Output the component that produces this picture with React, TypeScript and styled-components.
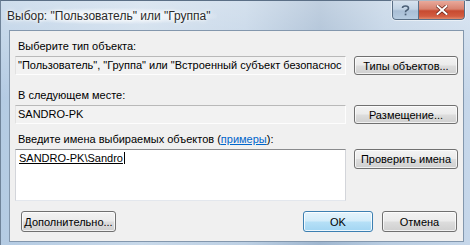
import React from 'react'
import styled, { createGlobalStyle, css } from 'styled-components'

const GlobalStyle = createGlobalStyle`
  html, body {
    margin: 0;
    padding: 0;
    width: 470px;
    height: 245px;
    overflow: hidden;
    font-family: "Liberation Sans", Arial, sans-serif;
  }
`

const Frame = styled.div`
  width: 470px;
  height: 245px;
  box-sizing: border-box;
  display: flex;
  flex-direction: column;
  border-top: 1px solid #5b6f86;
  border-left: 1px solid #6f8399;
  background:
    linear-gradient(180deg, rgba(255,255,255,0.35) 0%, rgba(255,255,255,0) 40%),
    linear-gradient(90deg, #b4cbe3 0%, #c8d9ea 30%, #bdd0e4 52%, #9fb6cf 68%, #b9cde2 82%, #c6d7ea 100%);
`

const TitleBar = styled.div`
  height: 29px;
  display: flex;
  align-items: flex-start;
  justify-content: space-between;
  padding-left: 6px;
  padding-right: 5px;
`

const Title = styled.div`
  margin-top: 7px;
  font-size: 12px;
  color: #2a2a2a;
  padding: 1px 6px 1px 0;
  background: radial-gradient(ellipse at center, rgba(240,245,250,0.85) 40%, rgba(240,245,250,0) 75%);
  text-shadow: 0 0 6px #fff, 0 0 3px #fff;
`

const Caption = styled.div`
  display: flex;
  height: 19px;
  box-shadow: 0 0 0 1px rgba(255,255,255,0.5);
  border-radius: 0 0 4px 4px;
  overflow: hidden;
`

const CaptionButton = styled.div<{ $close?: boolean }>`
  display: flex;
  align-items: center;
  justify-content: center;
  border: 1px solid #5a6f86;
  border-top: none;
  box-sizing: border-box;
  ${p => p.$close ? css`
    width: 46px;
    border-left: none;
    border-radius: 0 0 4px 0;
    background: linear-gradient(180deg, #e9a99b 0%, #d8826f 45%, #c74a30 55%, #d25c40 85%, #e08a6c 100%);
  ` : css`
    width: 27px;
    border-radius: 0 0 0 4px;
    background: linear-gradient(180deg, #d6e2ee 0%, #c2d3e4 45%, #a9bed5 55%, #b6cbe0 100%);
  `}
`

const Client = styled.div`
  flex: 1;
  margin: 0 6px 3px 8px;
  padding: 7px 6px 0 5px;
  background: #f0f0f0;
  border: 1px solid #8397ad;
  display: flex;
  flex-direction: column;
  font-size: 11px;
  color: #000;
`

const Label = styled.div<{ $top: number }>`
  margin-top: ${p => p.$top}px;
  padding-left: 3px;
  height: 14px;
  line-height: 14px;
  white-space: nowrap;
`

const Link = styled.span`
  color: #0066cc;
  text-decoration: underline;
`

const Row = styled.div<{ $align?: string }>`
  margin-top: 3px;
  display: grid;
  grid-template-columns: 331px 104px;
  column-gap: 8px;
  align-items: ${p => p.$align || 'center'};
`

const Field = styled.div`
  height: 19px;
  box-sizing: border-box;
  line-height: 17px;
  padding: 0 2px;
  white-space: nowrap;
  background: #f2f2f2;
  border-top: 1px solid #b9b9b9;
  border-left: 1px solid #e2e2e2;
  border-bottom: 1px solid #fdfdfd;
  border-right: 1px solid #fdfdfd;
`

const TextArea = styled.div`
  height: 52px;
  box-sizing: border-box;
  background: #fff;
  border-top: 1px solid #8a8b8d;
  border-left: 1px solid #d3d5da;
  border-right: 1px solid #d3d5da;
  border-bottom: 1px solid #e3e7ed;
  padding: 1px 3px;
  line-height: 15px;
`

const Resolved = styled.span`
  text-decoration: underline;
  border-right: 1px solid #000;
  padding-right: 1px;
`

const Button = styled.div<{ $primary?: boolean; $w?: number; $h?: number }>`
  box-sizing: border-box;
  width: ${p => (p.$w ? `${p.$w}px` : '100%')};
  height: ${p => p.$h || 19}px;
  display: flex;
  align-items: center;
  justify-content: center;
  border: 1px solid #707070;
  border-radius: 3px;
  white-space: nowrap;
  box-shadow: inset 0 0 0 1px rgba(255,255,255,0.7);
  background: linear-gradient(180deg, #f3f3f3 0%, #ebebeb 48%, #dddddd 52%, #cfcfcf 100%);
  ${p => p.$primary && css`
    border-color: #3c7fb1;
    box-shadow: inset 0 0 0 1px rgba(255,255,255,0.8);
    background: linear-gradient(180deg, #e5f4fc 0%, #d2ecfa 48%, #b6e0f7 52%, #a2d5f2 100%);
  `}
`

const BottomRow = styled.div`
  margin-top: 10px;
  display: flex;
  align-items: center;
  padding-left: 6px;
`

const Spacer = styled.div`
  flex: 1;
`

const ButtonGroup = styled.div`
  display: flex;
  gap: 9px;
`

const HelpIcon = () => (
  <svg width="9" height="11" viewBox="0 0 9 11">
    <path d="M1.5 3 Q1.5 1 4.5 1 Q7.5 1 7.5 3.2 Q7.5 4.6 5.5 5.4 Q4.5 5.9 4.5 7.2" fill="none" stroke="#4a5e75" strokeWidth="1.6" />
    <rect x="3.7" y="8.6" width="1.7" height="1.7" fill="#4a5e75" />
  </svg>
)

const CloseIcon = () => (
  <svg width="12" height="10" viewBox="0 0 12 10">
    <path d="M1.5 1 L10.5 9 M10.5 1 L1.5 9" stroke="#6b2418" strokeWidth="3.4" strokeLinecap="square" />
    <path d="M1.5 1 L10.5 9 M10.5 1 L1.5 9" stroke="#ffffff" strokeWidth="2" strokeLinecap="square" />
  </svg>
)

export default function App() {
  return (
    <>
      <GlobalStyle />
      <Frame>
        <TitleBar>
          <Title>Выбор: "Пользователь" или "Группа"</Title>
          <Caption>
            <CaptionButton><HelpIcon /></CaptionButton>
            <CaptionButton $close><CloseIcon /></CaptionButton>
          </Caption>
        </TitleBar>
        <Client>
          <Label $top={1}>Выберите тип объекта:</Label>
          <Row>
            <Field>"Пользователь", "Группа" или "Встроенный субъект безопаснос</Field>
            <Button>Типы объектов...</Button>
          </Row>
          <Label $top={13}>В следующем месте:</Label>
          <Row>
            <Field>SANDRO-PK</Field>
            <Button>Размещение...</Button>
          </Row>
          <Label $top={8}>
            Введите имена выбираемых объектов (<Link>примеры</Link>):
          </Label>
          <Row $align="start">
            <TextArea>
              <Resolved>SANDRO-PK\Sandro</Resolved>
            </TextArea>
            <Button $h={20}>Проверить имена</Button>
          </Row>
          <BottomRow>
            <Button $w={95} $h={21}>Дополнительно...</Button>
            <Spacer />
            <ButtonGroup>
              <Button $primary $w={70} $h={21}>OK</Button>
              <Button $w={75} $h={21}>Отмена</Button>
            </ButtonGroup>
          </BottomRow>
        </Client>
      </Frame>
    </>
  )
}
